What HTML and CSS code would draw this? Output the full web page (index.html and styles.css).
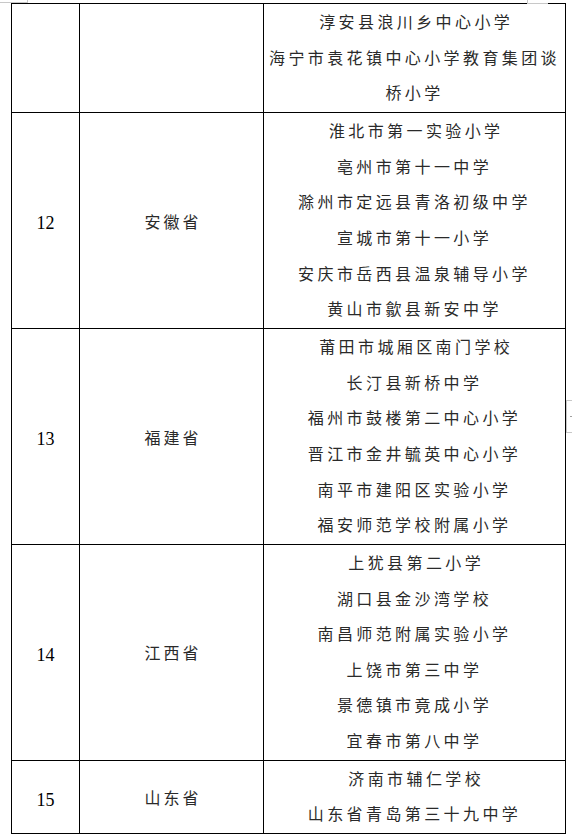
FILE: index.html
```html
<!DOCTYPE html>
<html lang="zh-CN">
<head>
<meta charset="utf-8">
<title>学校名单</title>
<link rel="stylesheet" href="styles.css">
</head>
<body>
<div class="page">
  <span class="mark mark-tl"></span>
  <span class="mark mark-tr"></span>
  <span class="mark mark-r"><i></i></span>
  <table class="list">
    <colgroup>
      <col class="c-num">
      <col class="c-prov">
      <col class="c-school">
    </colgroup>
    <tbody>
      <tr>
        <td class="num"></td>
        <td class="prov"></td>
        <td class="school">淳安县浪川乡中心小学<br>海宁市袁花镇中心小学教育集团谈桥小学</td>
      </tr>
      <tr>
        <td class="num">12</td>
        <td class="prov">安徽省</td>
        <td class="school">淮北市第一实验小学<br>亳州市第十一中学<br>滁州市定远县青洛初级中学<br>宣城市第十一小学<br>安庆市岳西县温泉辅导小学<br>黄山市歙县新安中学</td>
      </tr>
      <tr>
        <td class="num">13</td>
        <td class="prov">福建省</td>
        <td class="school">莆田市城厢区南门学校<br>长汀县新桥中学<br>福州市鼓楼第二中心小学<br>晋江市金井毓英中心小学<br>南平市建阳区实验小学<br>福安师范学校附属小学</td>
      </tr>
      <tr>
        <td class="num">14</td>
        <td class="prov">江西省</td>
        <td class="school">上犹县第二小学<br>湖口县金沙湾学校<br>南昌师范附属实验小学<br>上饶市第三中学<br>景德镇市竟成小学<br>宜春市第八中学</td>
      </tr>
      <tr>
        <td class="num">15</td>
        <td class="prov">山东省</td>
        <td class="school">济南市辅仁学校<br>山东省青岛第三十九中学</td>
      </tr>
    </tbody>
  </table>
</div>
</body>
</html>
```

FILE: styles.css
```css
html, body {
  margin: 0;
  padding: 0;
  background: #ffffff;
}

.page {
  position: relative;
  width: 572px;
  height: 839px;
  padding: 3px 0 0 11px;
  box-sizing: border-box;
  overflow: hidden;
}

.list {
  border-collapse: collapse;
  table-layout: fixed;
  width: 554px;
  font-family: "Noto Sans CJK SC", "Noto Sans CJK JP", sans-serif;
  font-size: 16px;
  color: #2a2a2a;
}

.c-num { width: 68px; }
.c-prov { width: 184px; }
.c-school { width: 302px; }

.list td {
  border: 1px solid #000;
  padding: 0 3px 1px;
  text-align: center;
  vertical-align: middle;
  line-height: 35.65px;
}

.list td.num {
  font-family: "Liberation Serif", "Times New Roman", serif;
  font-size: 18px;
  color: #000;
  padding: 7px 3px 0;
}

.list td.prov {
  letter-spacing: 3px;
  text-indent: 3px;
  padding: 2px 3px 0;
}

.school {
  letter-spacing: 3.4px;
  text-indent: 3.4px;
}

.mark {
  position: absolute;
  display: block;
  border-color: #c8c8c8;
  border-style: solid;
  border-width: 0;
}

.mark-tl {
  left: 0;
  top: 0;
  width: 27px;
  height: 2px;
  border-bottom-width: 1px;
  border-right-width: 1px;
}

.mark-tr {
  left: 527px;
  top: 0;
  width: 20px;
  height: 3px;
  border-left-width: 1px;
  border-bottom-width: 1px;
}

.mark-r {
  left: 566px;
  top: 400px;
  width: 8px;
  height: 31px;
  border-top-width: 1px;
  border-bottom-width: 1px;
  border-left-width: 1px;
}

.mark-r i {
  position: absolute;
  left: 3px;
  top: 15px;
  width: 3px;
  height: 1px;
  background: #a0a0a0;
}
```
